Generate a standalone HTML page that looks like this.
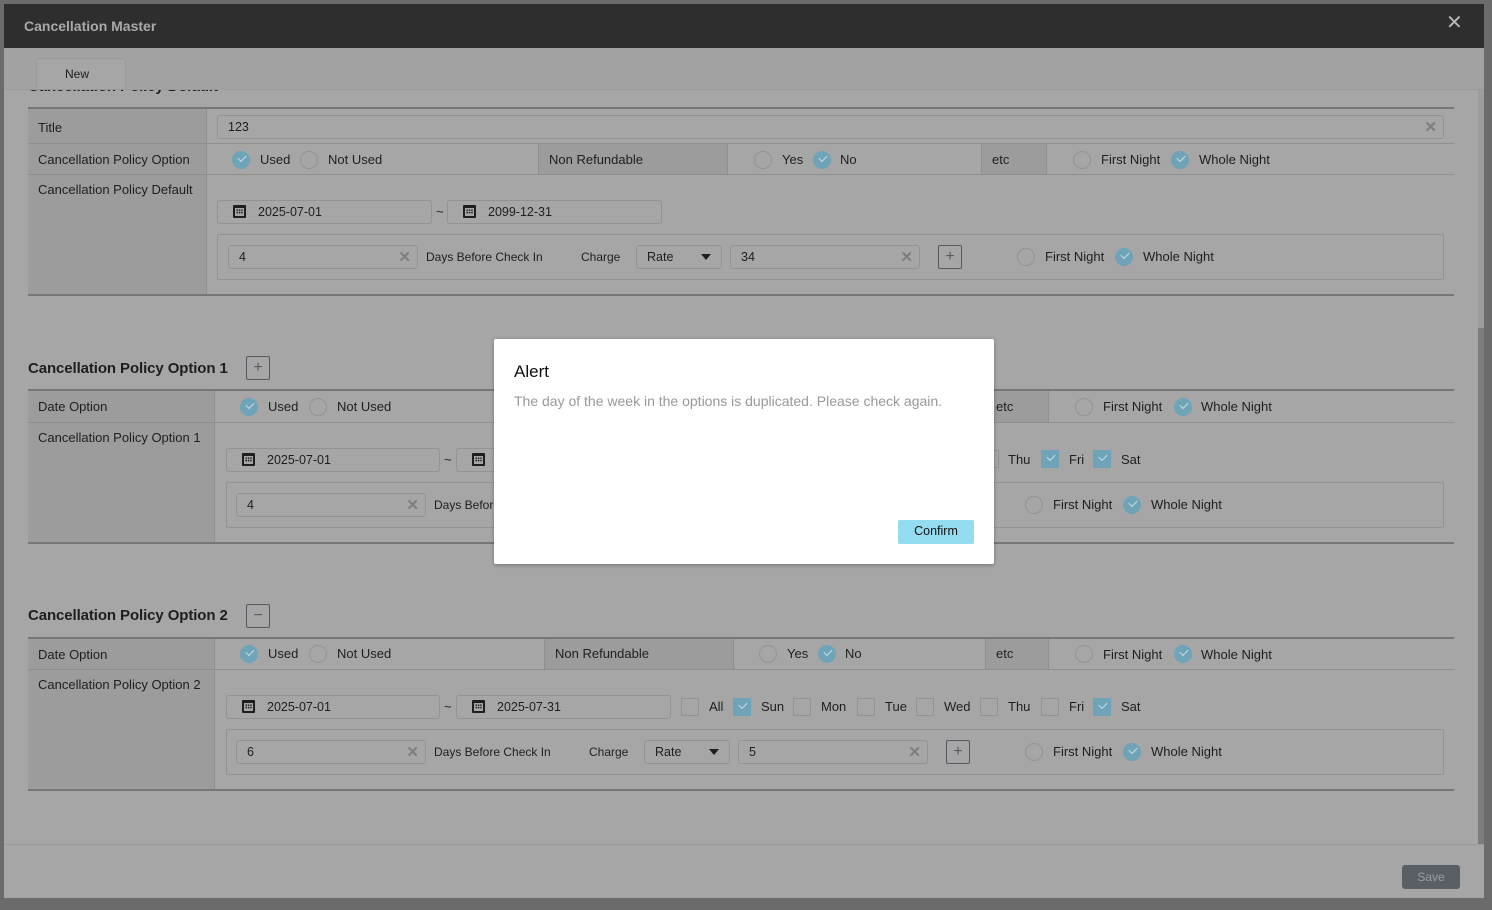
<!DOCTYPE html>
<html><head><meta charset="utf-8">
<style>
*{box-sizing:border-box;margin:0;padding:0}
body{width:1492px;height:910px;overflow:hidden;background:#6b6b6b;font-family:"Liberation Sans",Arial,sans-serif;font-size:13px;color:#1e1e1e;position:relative}
.a{position:absolute}
.t{position:absolute;white-space:nowrap;line-height:16px}
.lab{background:#9c9c9c}
.hl{position:absolute;height:1px;background:#8f8f8f}
.dl{position:absolute;height:2px;background:#777}
.inp{position:absolute;border:1px solid #939393;border-radius:3px;background:#a6a6a6;height:24px}
.inp span{position:absolute;left:10px;top:4px;font-size:12.5px}
.x{position:absolute;right:6px;top:2px;color:#7d7d7d;font-size:15px}
.r{position:absolute;width:18px;height:18px;border-radius:50%;border:1px solid #939393}
.r.on{background:#6fa3b8;border-color:#6fa3b8}
.r.on:after,.c.on:after{content:"";position:absolute;left:5px;top:3px;width:7px;height:4px;border-left:1.5px solid #c9dde5;border-bottom:1.5px solid #c9dde5;transform:rotate(-45deg)}
.c{position:absolute;width:18px;height:18px;border:1px solid #939393}
.c.on{background:#6fa3b8;border-color:#6fa3b8}
.cal{position:absolute;width:13px;height:13px;border:2px solid #1e1e1e;border-top-width:3px;border-radius:1px}
.cal:before{content:"";position:absolute;left:1px;top:1px;width:7px;height:5px;background:radial-gradient(circle,#1e1e1e 0.8px,transparent 1px) 0 0/2.4px 2.4px}
.box{position:absolute;border:1px solid #939393;border-radius:2px}
.pb{position:absolute;width:24px;height:24px;border:1px solid #555a63;border-radius:2px;text-align:center;line-height:21px;font-size:16px;color:#555a63}
.h{position:absolute;font-size:15px;font-weight:bold;white-space:nowrap;color:#1e1e1e;letter-spacing:-0.1px}
.sel:after{content:"";position:absolute;right:10px;top:8px;border-left:5px solid transparent;border-right:5px solid transparent;border-top:6px solid #1e1e1e}
</style></head><body>
<div class="a" style="left:4px;top:4px;width:1480px;height:894px;background:#a6a6a6"></div>
<div class="a" style="left:4px;top:4px;width:1480px;height:44px;background:#2e2e2e"></div>
<div class="t" style="left:24px;top:18px;color:#a9a9a9;font-weight:bold;font-size:14px">Cancellation Master</div>
<div class="t" style="left:1446px;top:15px;color:#b5b5b5;font-size:20px">✕</div>
<div class="a" style="left:4px;top:48px;width:1480px;height:42px;background:#a3a3a3"></div>
<div class="a" style="left:36px;top:58px;width:90px;height:32px;background:#a6a6a6;border:1px solid #999;border-bottom:none;border-radius:3px 3px 0 0"></div>
<div class="t" style="left:65px;top:66px;font-size:12px">New</div>
<div class="hl" style="left:4px;top:89px;width:1480px;background:#999"></div>
<div class="a" style="left:4px;top:90px;width:1474px;height:6px;overflow:hidden"><div class="h" style="left:24px;top:-12px">Cancellation Policy Default</div></div>
<div class="a" style="left:1478px;top:90px;width:6px;height:754px;background:#9c9c9c"></div>
<div class="a" style="left:1478px;top:328px;width:6px;height:516px;background:#7c7c7c"></div>

<div class="lab a" style="left:28px;top:109px;width:178px;height:186px"></div>
<div class="a" style="left:206px;top:109px;width:1px;height:186px;background:#8f8f8f"></div>
<div class="dl" style="left:28px;top:107px;width:1426px"></div>
<div class="hl" style="left:28px;top:143px;width:1426px"></div>
<div class="hl" style="left:28px;top:174px;width:1426px"></div>
<div class="dl" style="left:28px;top:294px;width:1426px"></div>
<div class="t" style="left:38px;top:120px">Title</div>
<div class="t" style="left:38px;top:152px">Cancellation Policy Option</div>
<div class="t" style="left:38px;top:182px">Cancellation Policy Default</div>
<div class="inp" style="left:217px;top:115px;width:1227px"><span>123</span><b class="x">✕</b></div>
<div class="r on" style="left:232px;top:151px"></div><div class="t" style="left:260px;top:152px">Used</div>
<div class="r" style="left:300px;top:151px"></div><div class="t" style="left:328px;top:152px">Not Used</div>
<div class="lab a" style="left:538px;top:144px;width:190px;height:30px;border-left:1px solid #8f8f8f;border-right:1px solid #8f8f8f"></div>
<div class="t" style="left:549px;top:152px">Non Refundable</div>
<div class="r" style="left:754px;top:151px"></div><div class="t" style="left:782px;top:152px">Yes</div>
<div class="r on" style="left:813px;top:151px"></div><div class="t" style="left:840px;top:152px">No</div>
<div class="lab a" style="left:981px;top:144px;width:66px;height:30px;border-left:1px solid #8f8f8f;border-right:1px solid #8f8f8f"></div>
<div class="t" style="left:992px;top:152px">etc</div>
<div class="r" style="left:1073px;top:151px"></div><div class="t" style="left:1101px;top:152px">First Night</div>
<div class="r on" style="left:1171px;top:151px"></div><div class="t" style="left:1199px;top:152px">Whole Night</div>
<div class="inp" style="left:217px;top:200px;width:215px"><span style="left:40px">2025-07-01</span></div><div class="cal" style="left:233px;top:205px"></div>
<div class="t" style="left:436px;top:204px">~</div>
<div class="inp" style="left:447px;top:200px;width:215px"><span style="left:40px">2099-12-31</span></div><div class="cal" style="left:463px;top:205px"></div>
<div class="box" style="left:217px;top:234px;width:1227px;height:46px"></div>
<div class="inp" style="left:228px;top:245px;width:190px"><span>4</span><b class="x">✕</b></div>
<div class="t" style="left:426px;top:249px;font-size:12px">Days Before Check In</div>
<div class="t" style="left:581px;top:249px;font-size:12px">Charge</div>
<div class="inp sel" style="left:636px;top:245px;width:86px"><span>Rate</span></div>
<div class="inp" style="left:730px;top:245px;width:190px"><span>34</span><b class="x">✕</b></div>
<div class="pb" style="left:938px;top:245px">+</div>
<div class="r" style="left:1017px;top:248px"></div><div class="t" style="left:1045px;top:249px">First Night</div>
<div class="r on" style="left:1115px;top:248px"></div><div class="t" style="left:1143px;top:249px">Whole Night</div>

<div class="h" style="left:28px;top:360px">Cancellation Policy Option 1</div>
<div class="pb" style="left:246px;top:356px">+</div>
<div class="lab a" style="left:28px;top:391px;width:186px;height:152px"></div>
<div class="a" style="left:214px;top:391px;width:1px;height:152px;background:#8f8f8f"></div>
<div class="dl" style="left:28px;top:389px;width:1426px"></div>
<div class="hl" style="left:28px;top:422px;width:1426px"></div>
<div class="dl" style="left:28px;top:542px;width:1426px"></div>
<div class="t" style="left:38px;top:399px">Date Option</div>
<div class="t" style="left:38px;top:430px">Cancellation Policy Option 1</div>
<div class="r on" style="left:240px;top:398px"></div><div class="t" style="left:268px;top:399px">Used</div>
<div class="r" style="left:309px;top:398px"></div><div class="t" style="left:337px;top:399px">Not Used</div>
<div class="lab a" style="left:985px;top:391px;width:64px;height:31px;border-left:1px solid #8f8f8f;border-right:1px solid #8f8f8f"></div>
<div class="t" style="left:996px;top:399px">etc</div>
<div class="r" style="left:1075px;top:398px"></div><div class="t" style="left:1103px;top:399px">First Night</div>
<div class="r on" style="left:1174px;top:398px"></div><div class="t" style="left:1201px;top:399px">Whole Night</div>
<div class="inp" style="left:226px;top:448px;width:214px"><span style="left:40px">2025-07-01</span></div><div class="cal" style="left:242px;top:453px"></div>
<div class="t" style="left:444px;top:452px">~</div>
<div class="inp" style="left:456px;top:448px;width:215px"><span style="left:40px">2025-07-31</span></div><div class="cal" style="left:472px;top:453px"></div>
<div class="c" style="left:981px;top:450px"></div><div class="t" style="left:1008px;top:452px">Thu</div>
<div class="c on" style="left:1041px;top:450px"></div><div class="t" style="left:1069px;top:452px">Fri</div>
<div class="c on" style="left:1093px;top:450px"></div><div class="t" style="left:1121px;top:452px">Sat</div>
<div class="box" style="left:226px;top:482px;width:1218px;height:46px"></div>
<div class="inp" style="left:236px;top:493px;width:190px"><span>4</span><b class="x">✕</b></div>
<div class="t" style="left:434px;top:497px;font-size:12px">Days Before Check In</div>
<div class="r" style="left:1025px;top:496px"></div><div class="t" style="left:1053px;top:497px">First Night</div>
<div class="r on" style="left:1123px;top:496px"></div><div class="t" style="left:1151px;top:497px">Whole Night</div>

<div class="h" style="left:28px;top:607px">Cancellation Policy Option 2</div>
<div class="pb" style="left:246px;top:604px">−</div>
<div class="lab a" style="left:28px;top:639px;width:186px;height:151px"></div>
<div class="a" style="left:214px;top:639px;width:1px;height:151px;background:#8f8f8f"></div>
<div class="dl" style="left:28px;top:637px;width:1426px"></div>
<div class="hl" style="left:28px;top:669px;width:1426px"></div>
<div class="dl" style="left:28px;top:789px;width:1426px"></div>
<div class="t" style="left:38px;top:647px">Date Option</div>
<div class="t" style="left:38px;top:677px">Cancellation Policy Option 2</div>
<div class="r on" style="left:240px;top:645px"></div><div class="t" style="left:268px;top:646px">Used</div>
<div class="r" style="left:309px;top:645px"></div><div class="t" style="left:337px;top:646px">Not Used</div>
<div class="lab a" style="left:544px;top:639px;width:190px;height:30px;border-left:1px solid #8f8f8f;border-right:1px solid #8f8f8f"></div>
<div class="t" style="left:555px;top:646px">Non Refundable</div>
<div class="r" style="left:759px;top:645px"></div><div class="t" style="left:787px;top:646px">Yes</div>
<div class="r on" style="left:818px;top:645px"></div><div class="t" style="left:845px;top:646px">No</div>
<div class="lab a" style="left:985px;top:639px;width:64px;height:30px;border-left:1px solid #8f8f8f;border-right:1px solid #8f8f8f"></div>
<div class="t" style="left:996px;top:646px">etc</div>
<div class="r" style="left:1075px;top:645px"></div><div class="t" style="left:1103px;top:647px">First Night</div>
<div class="r on" style="left:1174px;top:645px"></div><div class="t" style="left:1201px;top:647px">Whole Night</div>
<div class="inp" style="left:226px;top:695px;width:214px"><span style="left:40px">2025-07-01</span></div><div class="cal" style="left:242px;top:700px"></div>
<div class="t" style="left:444px;top:699px">~</div>
<div class="inp" style="left:456px;top:695px;width:215px"><span style="left:40px">2025-07-31</span></div><div class="cal" style="left:472px;top:700px"></div>
<div class="c" style="left:681px;top:698px"></div><div class="t" style="left:709px;top:699px">All</div>
<div class="c on" style="left:733px;top:698px"></div><div class="t" style="left:761px;top:699px">Sun</div>
<div class="c" style="left:793px;top:698px"></div><div class="t" style="left:821px;top:699px">Mon</div>
<div class="c" style="left:857px;top:698px"></div><div class="t" style="left:885px;top:699px">Tue</div>
<div class="c" style="left:916px;top:698px"></div><div class="t" style="left:944px;top:699px">Wed</div>
<div class="c" style="left:980px;top:698px"></div><div class="t" style="left:1008px;top:699px">Thu</div>
<div class="c" style="left:1041px;top:698px"></div><div class="t" style="left:1069px;top:699px">Fri</div>
<div class="c on" style="left:1093px;top:698px"></div><div class="t" style="left:1121px;top:699px">Sat</div>
<div class="box" style="left:226px;top:729px;width:1218px;height:46px"></div>
<div class="inp" style="left:236px;top:740px;width:190px"><span>6</span><b class="x">✕</b></div>
<div class="t" style="left:434px;top:744px;font-size:12px">Days Before Check In</div>
<div class="t" style="left:589px;top:744px;font-size:12px">Charge</div>
<div class="inp sel" style="left:644px;top:740px;width:86px"><span>Rate</span></div>
<div class="inp" style="left:738px;top:740px;width:190px"><span>5</span><b class="x">✕</b></div>
<div class="pb" style="left:946px;top:740px">+</div>
<div class="r" style="left:1025px;top:743px"></div><div class="t" style="left:1053px;top:744px">First Night</div>
<div class="r on" style="left:1123px;top:743px"></div><div class="t" style="left:1151px;top:744px">Whole Night</div>

<div class="a" style="left:4px;top:844px;width:1480px;height:54px;background:#a6a6a6;border-top:1px solid #999"></div>
<div class="a" style="left:1402px;top:865px;width:58px;height:24px;background:#5a5f66;border-radius:3px;color:#9a9ea4;text-align:center;line-height:24px;font-size:12px">Save</div>

<div class="a" style="left:494px;top:339px;width:500px;height:225px;background:#fff;border-radius:2px;box-shadow:0 1px 4px rgba(0,0,0,.3)"></div>
<div class="t" style="left:514px;top:362px;font-size:17px;line-height:20px;color:#111">Alert</div>
<div class="t" style="left:514px;top:393px;font-size:14px;color:#999">The day of the week in the options is duplicated. Please check again.</div>
<div class="a" style="left:898px;top:520px;width:76px;height:24px;background:#94dcef;border-radius:2px;text-align:center;line-height:23px;font-size:12.5px;color:#111">Confirm</div>
</body></html>
